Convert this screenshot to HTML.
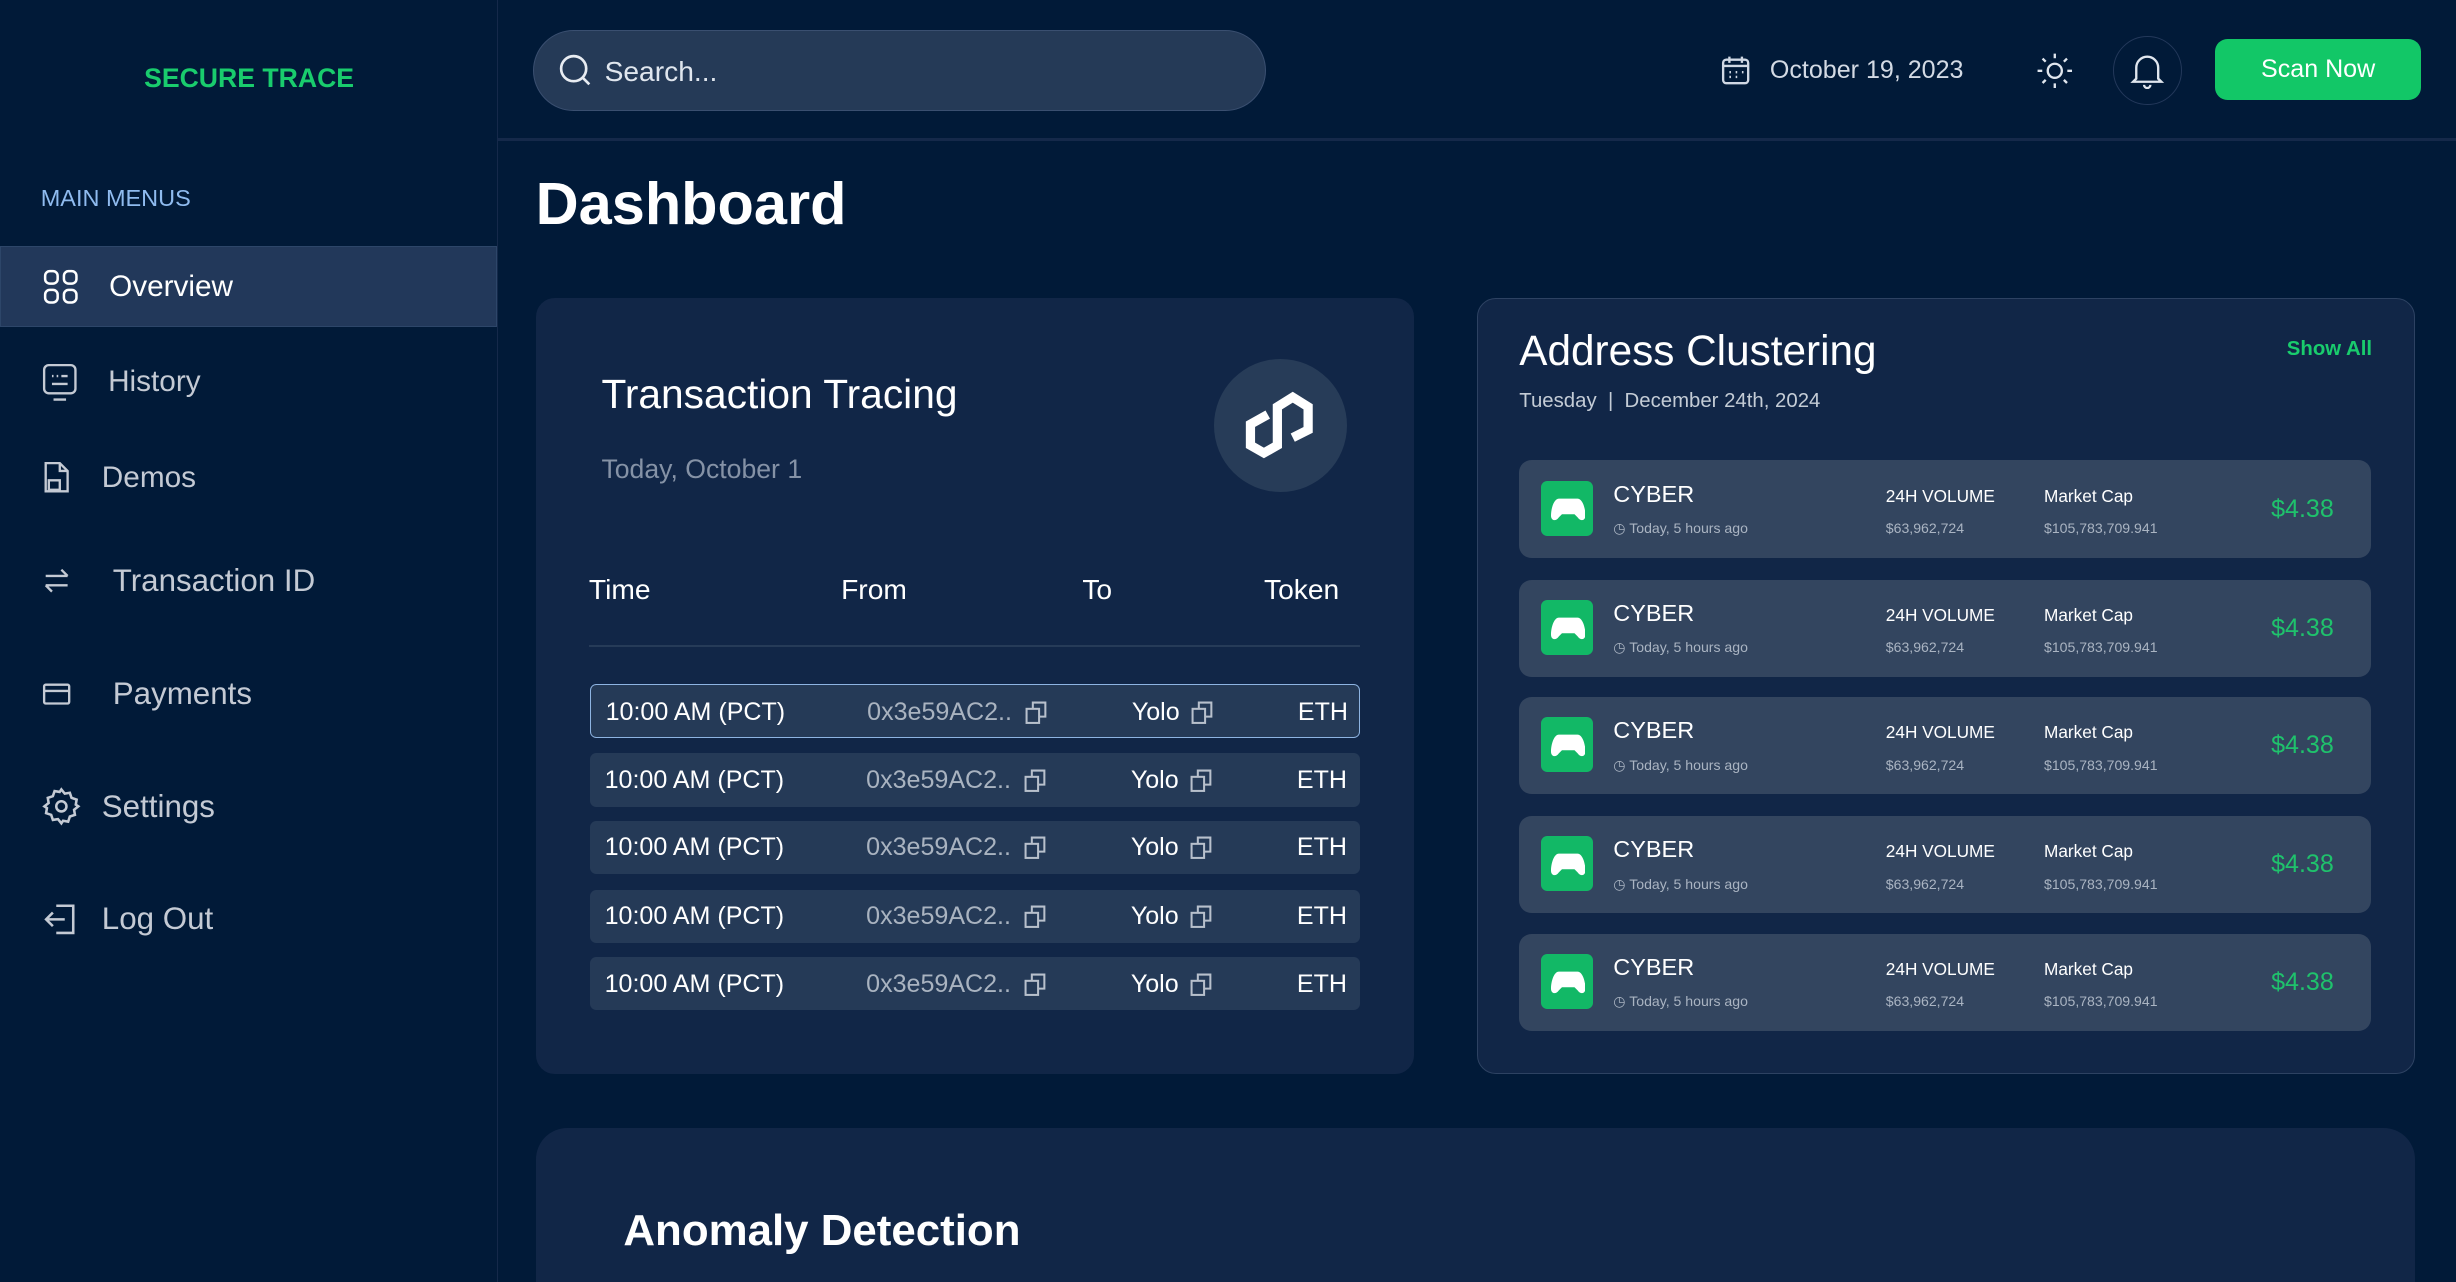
<!DOCTYPE html>
<html><head><meta charset="utf-8"><style>
*{box-sizing:border-box;margin:0;padding:0}
html,body{width:2456px;height:1282px;overflow:hidden;background:#011a38}
#w{zoom:1.5663;width:1568px;height:819px;position:relative;font-family:"Liberation Sans",sans-serif;color:#fff;background:#011a38}
.a{position:absolute;white-space:nowrap}
.side{position:absolute;left:0;top:0;width:318px;height:819px;border-right:1px solid #15294a}
.nav{position:absolute;left:0;width:317px;height:52px;display:flex;align-items:center;font-size:19px;color:#c4cad4}
.nav svg{position:absolute;left:26px}
.card{position:absolute;background:#112647;border-radius:12px}
.row{position:absolute;left:377px;width:491px;height:34px;background:#253a57;border-radius:4px;font-size:16px}
.row span{position:absolute;top:8px}
.item{position:absolute;left:970px;width:544px;height:62px;background:#33455f;border-radius:8px}
.item .ic{position:absolute;left:14px;top:13px;width:33px;height:35px;background:#12b866;border-radius:4px}
.item .t{position:absolute;font-size:15px;left:60px;top:13px}
.item .s{position:absolute;font-size:9px;color:#aab4c2}
.item .h{position:absolute;font-size:11px;top:16px}
.item .p{position:absolute;left:480px;top:22px;font-size:16px;color:#1fc26c}
</style></head><body><div id="w">
<div class="side">
<div class="a" style="left:92px;top:40px;font-size:17px;font-weight:bold;color:#19cc6d">SECURE TRACE</div>
<div class="a" style="left:26px;top:118px;font-size:15px;color:#8fbbef">MAIN MENUS</div>
<div class="nav" style="top:157px;background:#22385a;border:1px solid #2d4669;color:#fff"><svg width="24" height="24" viewBox="0 0 24 24" fill="none" stroke="#fff" stroke-width="1.6"><rect x="2" y="2" width="8" height="8" rx="3"/><rect x="14" y="2" width="8" height="8" rx="3"/><rect x="2" y="14" width="8" height="8" rx="3"/><rect x="14" y="14" width="8" height="8" rx="3"/></svg><span style="margin-left:69px">Overview</span></div>
<div class="nav" style="top:218px"><svg width="24" height="26" viewBox="0 0 24 26" fill="none" stroke="#c4cad4" stroke-width="1.5"><rect x="2" y="2" width="20" height="18" rx="3"/><path d="M7 9h1M10 9h1M13 9h4M7 14h10M8 24h8"/></svg><span style="margin-left:69px">History</span></div>
<div class="nav" style="top:279px"><svg width="20" height="22" viewBox="0 0 20 22" fill="none" stroke="#c4cad4" stroke-width="1.5"><path d="M3 2h9l5 5v13H3zM12 2v5h5M5 13h7v6H5z"/></svg><span style="margin-left:65px">Demos</span></div>
<div class="nav" style="top:345px"><svg width="20" height="20" viewBox="0 0 20 20" fill="none" stroke="#c4cad4" stroke-width="1.5"><path d="M3 7h14M13 3l4 4M17 13H3M7 17l-4-4"/></svg><span style="margin-left:72px;font-size:20px">Transaction ID</span></div>
<div class="nav" style="top:417px"><svg width="20" height="18" viewBox="0 0 20 18" fill="none" stroke="#c4cad4" stroke-width="1.5"><rect x="2" y="3" width="16" height="12" rx="1"/><path d="M2 7h16"/></svg><span style="margin-left:72px;font-size:20px">Payments</span></div>
<div class="nav" style="top:489px"><svg width="26" height="26" viewBox="0 0 24 24" fill="none" stroke="#c4cad4" stroke-width="1.5"><circle cx="12" cy="12" r="3"/><path d="M12 2l2 2.5 3-.5 1 3 3 1-.5 3L22 12l-2.5 2 .5 3-3 1-1 3-3-.5L12 22l-2-2.5-3 .5-1-3-3-1 .5-3L2 12l2.5-2-.5-3 3-1 1-3 3 .5z"/></svg><span style="margin-left:65px;font-size:20px">Settings</span></div>
<div class="nav" style="top:561px"><svg width="26" height="26" viewBox="0 0 24 24" fill="none" stroke="#c4cad4" stroke-width="1.5"><path d="M9 4h10v16H9M3 12h11M7 8l-4 4 4 4"/></svg><span style="margin-left:65px;font-size:20px">Log Out</span></div>
</div>
<div class="a" style="left:318px;top:88px;width:1250px;height:2px;background:#15294a"></div>
<div class="a" style="left:340px;top:19px;width:468px;height:52px;border-radius:26px;background:#253a57;border:1px solid #3a4f70"></div>
<svg class="a" style="left:356px;top:34px" width="22" height="22" viewBox="0 0 22 22" fill="none" stroke="#e8ecf2" stroke-width="1.7"><circle cx="10" cy="10" r="8"/><path d="M16 16l4 4"/></svg>
<div class="a" style="left:386px;top:35px;font-size:18px;color:#e0e6ee">Search...</div>
<svg class="a" style="left:1098px;top:35px" width="20" height="20" viewBox="0 0 20 20" fill="none" stroke="#d0d8e4" stroke-width="1.5"><rect x="2" y="3" width="16" height="15" rx="2"/><path d="M2 7h16M6 1v4M14 1v4M6 11h1M10 11h1M14 11h1M6 14h1M10 14h1"/></svg>
<div class="a" style="left:1130px;top:36px;font-size:16px;color:#d3dae4">October 19, 2023</div>
<svg class="a" style="left:1300px;top:33px" width="24" height="24" viewBox="0 0 24 24" fill="none" stroke="#e0e6ee" stroke-width="1.5"><circle cx="12" cy="12" r="4.5"/><path d="M12 1v3M12 20v3M1 12h3M20 12h3M4.2 4.2l2 2M17.8 17.8l2 2M4.2 19.8l2-2M17.8 6.2l2-2"/></svg>
<div class="a" style="left:1349px;top:23px;width:44px;height:44px;border-radius:50%;border:1px solid #23385a"></div>
<svg class="a" style="left:1360px;top:33px" width="22" height="24" viewBox="0 0 22 24" fill="none" stroke="#e0e6ee" stroke-width="1.5"><path d="M4 17V10a7 7 0 0114 0v7l2 2H2zM9 21a2 2 0 004 0"/></svg>
<div class="a" style="left:1414px;top:25px;width:132px;height:39px;background:#12c767;border-radius:8px;font-size:16px;text-align:center;line-height:39px">Scan Now</div>
<div class="a" style="left:342px;top:108px;font-size:38px;font-weight:bold">Dashboard</div>

<div class="card" style="left:342px;top:190px;width:561px;height:496px"></div>
<div class="a" style="left:384px;top:237px;font-size:26px">Transaction Tracing</div>
<div class="a" style="left:384px;top:290px;font-size:17px;color:#8592a6">Today, October 1</div>
<div class="a" style="left:775px;top:229px;width:85px;height:85px;border-radius:50%;background:#273c58"></div>
<svg class="a" style="left:790px;top:246px" width="54" height="50" viewBox="0 0 44 40" fill="none" stroke="#fff" stroke-width="4.8" stroke-linejoin="miter"><path d="M16 15L7 20V31L14 35L21 31V11L29 6L37 11V23L29 27"/></svg>
<div class="a" style="left:376px;top:366px;font-size:18px">Time</div>
<div class="a" style="left:537px;top:366px;font-size:18px">From</div>
<div class="a" style="left:691px;top:366px;font-size:18px">To</div>
<div class="a" style="left:807px;top:366px;font-size:18px">Token</div>
<div class="a" style="left:376px;top:412px;width:492px;height:1px;background:#263b58"></div>
<div id="rows"></div>

<div class="card" style="left:943px;top:190px;width:599px;height:496px;border:1px solid #2d4262"></div>
<div class="a" style="left:970px;top:209px;font-size:27px">Address Clustering</div>
<div class="a" style="left:1460px;top:216px;font-size:13px;font-weight:bold;color:#19cc6d">Show All</div>
<div class="a" style="left:970px;top:249px;font-size:13px;color:#c4ccd6">Tuesday &nbsp;| &nbsp;December 24th, 2024</div>
<div id="items"></div>

<div class="card" style="left:342px;top:720px;width:1200px;height:120px;border-radius:20px"></div>
<div class="a" style="left:398px;top:770px;font-size:28px;font-weight:bold">Anomaly Detection</div>
</div>
<script>
var cp='<svg width="14" height="15" viewBox="0 0 14 15" fill="none" stroke="#b8c0cc" stroke-width="1.3"><rect x="1" y="5" width="8" height="9"/><path d="M5 5V1h8v9H9"/></svg>';
var tops=[437,481,524,568,611],h='';
tops.forEach(function(t,i){h+='<div class="row" style="top:'+t+'px'+(i==0?';border:1px solid #8eb4e2':'')+'"><span style="left:9px">10:00 AM (PCT)</span><span style="left:176px;color:#a9b3c0">0x3e59AC2..</span><span style="left:277px;top:10px">'+cp+'</span><span style="left:345px">Yolo</span><span style="left:383px;top:10px">'+cp+'</span><span style="left:451px">ETH</span></div>';});
document.getElementById('rows').outerHTML=h;
var it=[294,370,445,521,596],g='';
var pad='<svg width="22" height="16" viewBox="0 0 22 16" fill="#fff"><path d="M5 1h12c3 0 5 6 5 11 0 3-3 4-5 1l-2-2H7l-2 2c-2 3-5 2-5-1C0 7 2 1 5 1z"/></svg>';
it.forEach(function(t){g+='<div class="item" style="top:'+t+'px"><div class="ic"><div style="position:absolute;left:6px;top:10px">'+pad+'</div></div><div class="t">CYBER</div><div class="s" style="left:60px;top:38px">◷ Today, 5 hours ago</div><div class="h" style="left:234px">24H VOLUME</div><div class="s" style="left:234px;top:38px">$63,962,724</div><div class="h" style="left:335px">Market Cap</div><div class="s" style="left:335px;top:38px">$105,783,709.941</div><div class="p">$4.38</div></div>';});
document.getElementById('items').outerHTML=g;
</script>
</body></html>
